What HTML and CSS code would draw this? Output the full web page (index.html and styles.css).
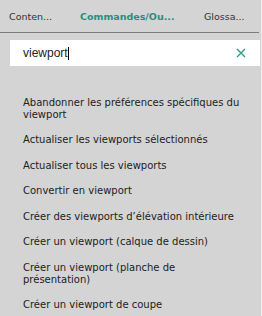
FILE: index.html
```html
<!DOCTYPE html>
<html lang="fr">

<head>
    <meta charset="UTF-8">
    <meta name="viewport" content="width=device-width, initial-scale=1.0">
    <title>Aide</title>
    <link rel="stylesheet" href="styles.css">
</head>

<body>
    <div class="panel">
        <!-- Onglets -->
        <div class="tabs">
            <span class="tab">Conten...</span>
            <span class="tab active">Commandes/Ou...</span>
            <span class="tab">Glossa...</span>
        </div>

        <!-- Recherche -->
        <div class="search">
            <span class="search-text">viewport</span><span class="caret"></span>
            <svg class="clear" width="10" height="10" viewBox="0 0 10 10">
                <path d="M1 1 L9 9 M9 1 L1 9" stroke="#2e9c8c" stroke-width="1.4" fill="none" />
            </svg>
        </div>

        <!-- Résultats -->
        <ul class="results">
            <li>Abandonner les préférences spécifiques du viewport</li>
            <li>Actualiser les viewports sélectionnés</li>
            <li>Actualiser tous les viewports</li>
            <li>Convertir en viewport</li>
            <li>Créer des viewports d’élévation intérieure</li>
            <li>Créer un viewport (calque de dessin)</li>
            <li>Créer un viewport (planche de présentation)</li>
            <li>Créer un viewport de coupe</li>
        </ul>
    </div>
</body>

</html>
```

FILE: styles.css
```css
body {
    margin: 0;
    background-color: #d4d4d4;
    font-family: "DejaVu Sans", Verdana, sans-serif;
    color: #222;
}

.panel {
    width: 261px;
    height: 316px;
    border-right: 1px solid #ececec;
    overflow: hidden;
}

.tabs {
    display: flex;
    height: 32px;
    align-items: center;
    padding-left: 9px;
    border-bottom: 1px solid #7c7c7c;
    margin-right: 2px;
    font-size: 9.5px;
}

.tab {
    color: #333;
    white-space: nowrap;
}

.tab:nth-child(1) {
    width: 71px;
}

.tab:nth-child(2) {
    width: 124px;
}

.active {
    color: #2a8c80;
    font-weight: bold;
}

.search {
    display: flex;
    align-items: center;
    height: 26px;
    margin: 7px 1px 0 10px;
    padding-left: 13px;
    background-color: #fff;
    font-family: "Liberation Sans", Arial, sans-serif;
    font-size: 12px;
}

.search-text {
    color: #222;
}

.caret {
    width: 1px;
    height: 13px;
    background-color: #000;
}

.clear {
    margin-left: auto;
    margin-right: 14px;
}

.results {
    list-style: none;
    margin: 24px 0 0 0;
    padding: 0 0 0 23px;
    width: 218px;
    font-size: 10px;
    line-height: 12px;
}

.results li {
    padding: 6.75px 0;
}
```
